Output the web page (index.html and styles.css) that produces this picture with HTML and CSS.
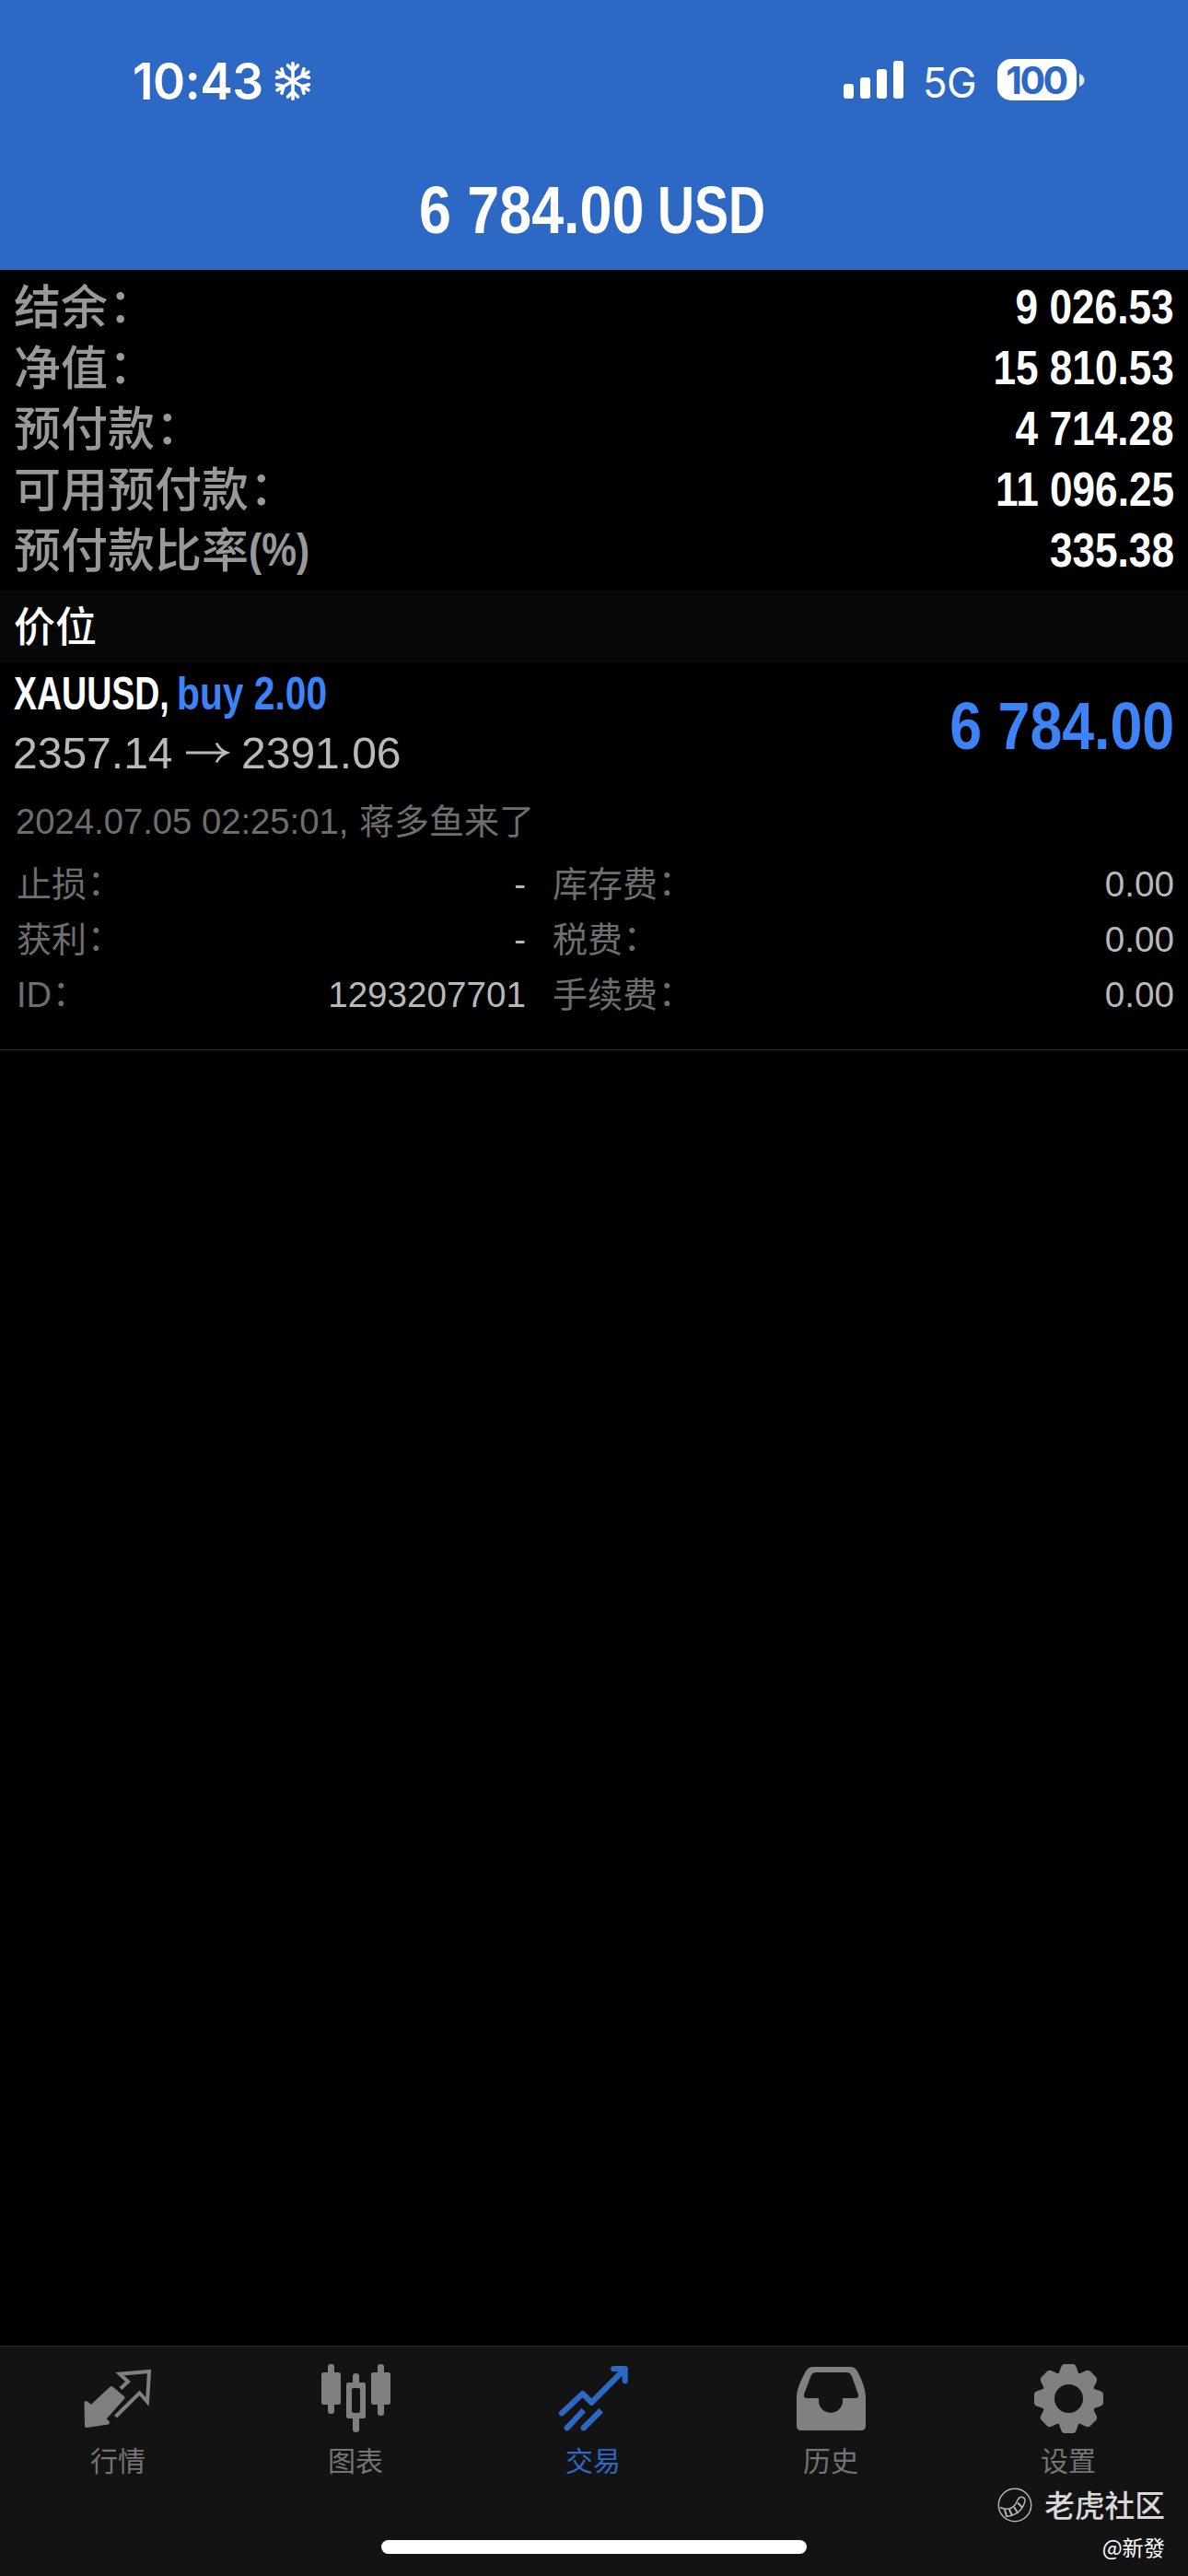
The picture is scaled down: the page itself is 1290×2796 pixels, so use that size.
FILE: index.html
```html
<!DOCTYPE html>
<html lang="zh-CN">
<head>
<meta charset="utf-8">
<title>交易</title>
<link rel="stylesheet" href="styles.css">
</head>
<body>
<div class="screen">
  <header class="header">
    <div class="status">
      <div class="status-left">
        <span class="time">10:43</span>
        <svg class="snow" width="40" height="46" viewBox="-20 -23 40 46">
          <defs><path id="arm" d="M0 0V-19.5M-5.5 -17L0 -11.5L5.5 -17"/></defs>
          <g fill="none" stroke="#fff" stroke-width="3.6" stroke-linecap="round" stroke-linejoin="round">
            <use href="#arm"/><use href="#arm" transform="rotate(60)"/><use href="#arm" transform="rotate(120)"/>
            <use href="#arm" transform="rotate(180)"/><use href="#arm" transform="rotate(240)"/><use href="#arm" transform="rotate(300)"/>
          </g>
        </svg>
      </div>
      <div class="status-right">
        <svg class="signal" width="65" height="42" viewBox="0 0 65 42" fill="#fff">
          <rect x="0" y="25" width="11" height="16" rx="3"/><rect x="18" y="18" width="11" height="23" rx="3"/>
          <rect x="36" y="9" width="11" height="32" rx="3"/><rect x="54" y="0" width="11" height="41" rx="3"/>
        </svg>
        <span class="network">5G</span>
        <span class="battery">100</span>
        <svg class="nub" width="6" height="14" viewBox="0 0 6 14"><path d="M0 0Q5.500 2 5.500 7T0 14Z" fill="#dfe9f7"/></svg>
      </div>
    </div>
    <h1 class="title"><span class="title-sum">6 784.00</span><span class="title-cur">USD</span></h1>
  </header>

  <dl class="summary">
    <div class="row"><dt>结余<span class="colon">：</span></dt><dd>9 026.53</dd></div>
    <div class="row"><dt>净值<span class="colon">：</span></dt><dd>15 810.53</dd></div>
    <div class="row"><dt>预付款<span class="colon">：</span></dt><dd>4 714.28</dd></div>
    <div class="row"><dt>可用预付款<span class="colon">：</span></dt><dd>11 096.25</dd></div>
    <div class="row"><dt>预付款比率<span class="pct">(%)</span></dt><dd>335.38</dd></div>
  </dl>

  <h2 class="section">价位</h2>

  <article class="position">
    <div class="position-main">
      <div class="position-info">
        <div class="symbol"><span class="name">XAUUSD,</span><span class="side">buy 2.00</span></div>
        <div class="prices">
          <span class="price">2357.14</span>
          <svg class="arrow" width="48" height="26" viewBox="0 0 48 26"><path d="M0 13H43M33 2.500Q36.500 10 44.500 13Q36.500 16 33 23.500" fill="none" stroke="#b9b9b9" stroke-width="2.800"/></svg>
          <span class="price">2391.06</span>
        </div>
      </div>
      <div class="profit">6 784.00</div>
    </div>
    <div class="comment"><span class="stamp">2024.07.05 02:25:01,</span><span class="author">蒋多鱼来了</span></div>
    <div class="details">
      <div class="cell"><span class="key">止损<span class="colon">：</span></span><span class="val">-</span></div>
      <div class="cell"><span class="key">库存费<span class="colon">：</span></span><span class="val">0.00</span></div>
      <div class="cell"><span class="key">获利<span class="colon">：</span></span><span class="val">-</span></div>
      <div class="cell"><span class="key">税费<span class="colon">：</span></span><span class="val">0.00</span></div>
      <div class="cell"><span class="key">ID<span class="colon">：</span></span><span class="val">1293207701</span></div>
      <div class="cell"><span class="key">手续费<span class="colon">：</span></span><span class="val">0.00</span></div>
    </div>
  </article>

  <nav class="tabs">
    <div class="tab">
      <svg width="90" height="90" viewBox="0 0 90 90">
        <path d="M47 33.500L55 26L46 17.700L78 15L76 48L67.500 38.300L41.500 64" fill="none" stroke="currentColor" stroke-width="4"/>
        <path d="M37 33L49.500 43.500L29 66.500L33 70.500L10 74L9.500 49L15 53.500Z" fill="currentColor" stroke="currentColor" stroke-width="4" stroke-linejoin="round"/>
      </svg>
      <span>行情</span>
    </div>
    <div class="tab">
      <svg width="90" height="90" viewBox="0 0 90 90" fill="currentColor">
        <rect x="7" y="16" width="21" height="35" rx="2.500"/><rect x="14" y="7" width="7" height="54" rx="3"/>
        <path fill-rule="evenodd" d="M36 27H53Q55 27 55 29V64Q55 66 53 66H36Q34 66 34 64V29Q34 27 36 27ZM42 33Q40 33 40 35V58Q40 60 42 60H47Q49 60 49 58V35Q49 33 47 33Z"/>
        <path d="M41 28V20Q41 17 44.500 17T48 20V28ZM41 65H48V78Q48 81 44.500 81T41 78Z"/>
        <rect x="61" y="16" width="21" height="35" rx="2.500"/><rect x="68" y="7" width="7" height="56" rx="3"/>
      </svg>
      <span>图表</span>
    </div>
    <div class="tab active">
      <svg width="90" height="90" viewBox="0 0 90 90" fill="none" stroke="currentColor" stroke-width="6.200">
        <path d="M10 60.300L32.700 39L42.300 48.700L78.500 12.200M66.300 12H78.700V25" stroke-linecap="round" stroke-linejoin="round"/>
        <path d="M15.700 76.300L33.700 57M33.700 76.300L52.700 57.300"/>
        <path d="M15.700 76.300h0.010M33.700 76.300h0.010" stroke-linecap="round"/>
      </svg>
      <span>交易</span>
    </div>
    <div class="tab">
      <svg width="90" height="90" viewBox="0 0 90 90" fill="currentColor">
        <path fill-rule="evenodd" d="M7 43C7 33 14 20 17.500 14Q20 10 25 10H65Q70 10 72.500 14C76 20 82 33 82 43V74Q82 79 77 79H12Q7 79 7 74ZM15 40Q14.500 44 18 44H31V47A13 12.700 0 0 0 57 47V44H70.500Q75 44 74 40L67 20.500Q65.500 16 61 16H28.500Q24 16 22.500 20Z"/>
      </svg>
      <span>历史</span>
    </div>
    <div class="tab">
      <svg width="90" height="90" viewBox="-44.500 -44.500 90 90">
        <defs><path id="tooth" d="M-11.500 -26C-9 -29.500 -9 -37.500 -4.500 -37.500H4.500C9 -37.500 9 -29.500 11.500 -26Z"/></defs>
        <circle r="22.500" fill="none" stroke="currentColor" stroke-width="14"/>
        <g fill="currentColor">
          <use href="#tooth"/><use href="#tooth" transform="rotate(45)"/><use href="#tooth" transform="rotate(90)"/><use href="#tooth" transform="rotate(135)"/>
          <use href="#tooth" transform="rotate(180)"/><use href="#tooth" transform="rotate(225)"/><use href="#tooth" transform="rotate(270)"/><use href="#tooth" transform="rotate(315)"/>
        </g>
      </svg>
      <span>设置</span>
    </div>
  </nav>
  <div class="home"></div>

  <div class="watermark">
    <div class="brand">
      <svg width="40" height="40" viewBox="0 0 40 40" fill="none" stroke="#b4b4b4" stroke-width="1.500">
        <circle cx="20" cy="20" r="17.700"/>
        <path d="M4 22.500Q14 27 20 20Q22 17 23 14.500Q25 10.500 28.500 11.500Q32 13 30.500 17.500Q26 31 10 32.500"/>
        <path d="M9 25L11 32M14 24.500L17 31.500M19 22L23.500 29M23 17.500L28.500 23" stroke-width="2"/>
      </svg>
      <span>老虎社区</span>
    </div>
    <div class="user">@新發</div>
  </div>
</div>
</body>
</html>
```
FILE: styles.css
```css
* { box-sizing: border-box; margin: 0; padding: 0; }
body { background: #000; }
.screen {
  position: relative;
  display: flex;
  flex-direction: column;
  width: 1290px;
  height: 2796px;
  overflow: hidden;
  background: #000;
  color: #fff;
  font-family: "Liberation Sans", "Noto Sans CJK SC", sans-serif;
  white-space: nowrap;
}

/* header */
.header { height: 293px; background: #2d68c4; }
.status {
  display: flex;
  justify-content: space-between;
  height: 176px;
  padding: 0 112px 0 144px;
  font-family: Inter, sans-serif;
}
.status-left, .status-right { display: flex; align-items: center; }
.time { width: 154px; font-size: 55px; font-weight: 600; letter-spacing: -0.5px; transform: scaleX(0.97); transform-origin: left; }
.signal { margin-right: 21px; margin-bottom: 3px; }
.network { width: 81px; padding-top: 3px; font-size: 45px; letter-spacing: -0.5px; transform: scaleX(0.97); transform-origin: left; }
.battery {
  width: 86px;
  height: 45px;
  margin-bottom: 3px;
  padding-right: 2px;
  border-radius: 15px;
  background: #fff;
  color: #2d68c4;
  font-size: 41px;
  font-weight: 700;
  line-height: 46px;
  text-align: center;
  letter-spacing: -2.5px;
}
.nub { margin-left: 3px; margin-bottom: 3px; }
.title {
  display: flex;
  height: 104px;
  padding-left: 455px;
  font-size: 73px;
  line-height: 104px;
}
.title-sum { width: 259px; transform: scaleX(0.86); transform-origin: left; }
.title-cur { transform: scaleX(0.76); transform-origin: left; }

/* account summary */
.summary { height: 348px; padding: 7px 15px 0; font-size: 51px; }
.row { display: flex; justify-content: space-between; height: 66px; line-height: 68px; }
.row dt { color: #999; font-weight: 500; line-height: 70px; }
.row dd { font-weight: 700; transform: scaleX(0.866); transform-origin: right; }
.pct { display: inline-block; vertical-align: 2px; line-height: 60px; transform: scaleX(0.85); transform-origin: left; font-weight: 700; font-size: 50px; }
.colon { display: inline-block; line-height: 1; transform: translate(0.02em, -0.04em); }

.section {
  height: 78px;
  padding-left: 15px;
  background: #070707;
  font-size: 45px;
  font-weight: 500;
  line-height: 82px;
}

/* open position */
.position { height: 421px; border-bottom: 1px solid #303030; }
.position-main { display: flex; justify-content: space-between; height: 138px; padding: 0 15px 0 14px; }
.symbol { display: flex; height: 68px; padding-left: 1px; font-size: 50px; font-weight: 700; line-height: 69px; }
.name { width: 177px; transform: scaleX(0.75); transform-origin: left; }
.side { transform: scaleX(0.815); transform-origin: left; color: #3b83f7; }
.prices { display: flex; align-items: center; height: 59px; color: #b9b9b9; font-size: 49px; }
.price { width: 188px; transform: scaleX(0.98); transform-origin: left; }
.arrow { margin-right: 12px; }
.profit { color: #3b83f7; font-size: 73px; font-weight: 700; line-height: 138px; transform: scaleX(0.858); transform-origin: right; }
.comment { display: flex; height: 70px; padding-left: 17px; color: #6e6e6e; font-size: 39px; line-height: 70px; }
.stamp { width: 373px; transform: scaleX(0.98); transform-origin: left; }
.author, .key { font-size: 38px; }
.details {
  display: grid;
  grid-template-columns: 553px 675px;
  column-gap: 29px;
  padding: 3px 0 0 18px;
  font-size: 39px;
}
.cell { display: flex; justify-content: space-between; height: 60px; line-height: 60px; }
.key { color: #6e6e6e; }
.val { color: #b9b9b9; transform: scaleX(0.99); transform-origin: right; }

/* bottom bar */
.tabs {
  display: grid;
  grid-template-columns: repeat(5, 1fr);
  height: 250px;
  margin-top: auto;
  padding-top: 12px;
  border-top: 1px solid #303030;
  background: #131313;
  color: #808080;
}
.tab { display: flex; flex-direction: column; align-items: center; font-family: "Noto Sans CJK SC", sans-serif; font-size: 30px; line-height: 41px; }
.tab span { padding-right: 2px; color: #747474; }
.tab.active, .tab.active span { color: #2d68c4; }
.home {
  position: absolute;
  left: 414px;
  bottom: 24px;
  width: 462px;
  height: 15px;
  border-radius: 8px;
  background: #fff;
}
.watermark {
  position: absolute;
  right: 25px;
  bottom: 14px;
  display: flex;
  flex-direction: column;
  align-items: flex-end;
  font-family: "Noto Sans CJK SC", sans-serif;
}
.brand { display: flex; align-items: center; gap: 12px; height: 40px; color: #d9d9d9; font-size: 32.700px; font-weight: 500; line-height: 36px; }
.brand span { margin-bottom: 2px; }
.user { margin-top: 7px; font-size: 23.200px; line-height: 36px; }
```
